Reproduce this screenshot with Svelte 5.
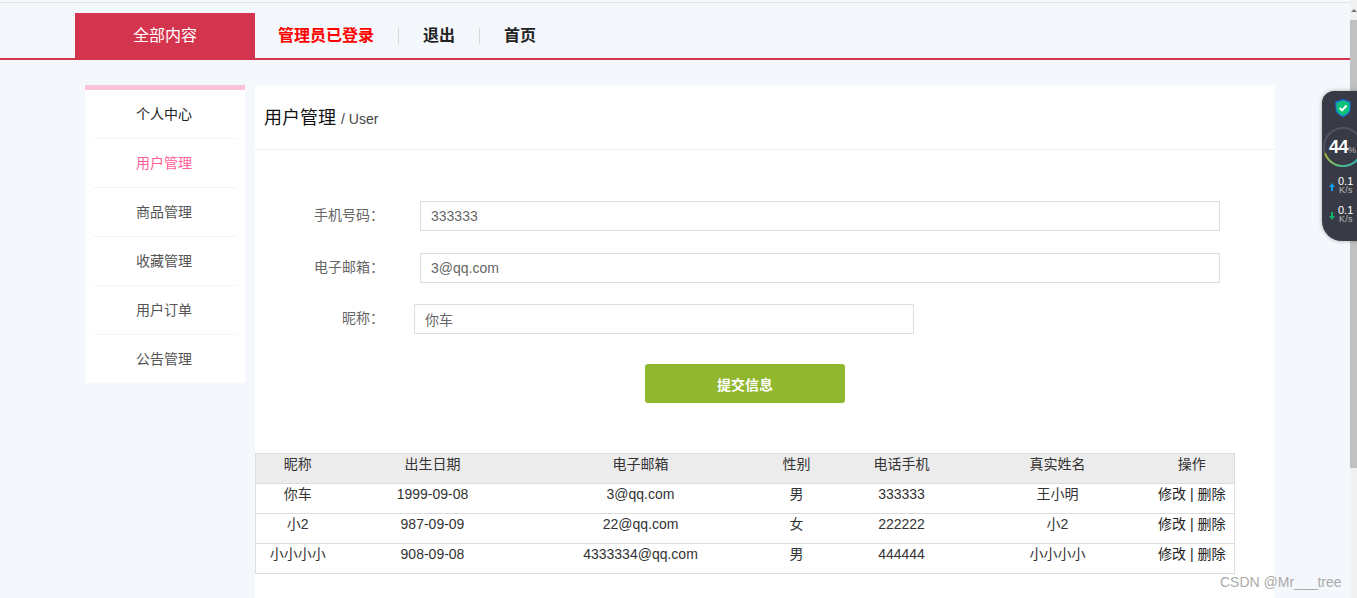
<script>
    const menu = [
        { name: '个人中心', cls: 'first' },
        { name: '用户管理', cls: 'active' },
        { name: '商品管理', cls: '' },
        { name: '收藏管理', cls: '' },
        { name: '用户订单', cls: '' },
        { name: '公告管理', cls: '' }
    ];

    const fields = [
        { label: '手机号码：', value: '333333', cls: 'first-row' },
        { label: '电子邮箱：', value: '3@qq.com', cls: '' },
        { label: '昵称：', value: '你车', cls: 'short' }
    ];

    const columns = [
        { title: '昵称', width: 84 },
        { title: '出生日期', width: 186 },
        { title: '电子邮箱', width: 230 },
        { title: '性别', width: 82 },
        { title: '电话手机', width: 128 },
        { title: '真实姓名', width: 184 },
        { title: '操作', width: 85 }
    ];

    const users = [
        ['你车', '1999-09-08', '3@qq.com', '男', '333333', '王小明'],
        ['小2', '987-09-09', '22@qq.com', '女', '222222', '小2'],
        ['小小小小', '908-09-08', '4333334@qq.com', '男', '444444', '小小小小']
    ];
</script>

<div class="page">
    <div class="strip"></div>
    <header class="topbar">
        <div class="all">全部内容</div>
        <nav class="links">
            <span class="admin">管理员已登录</span>
            <span class="link sep">退出</span>
            <span class="link">首页</span>
        </nav>
    </header>

    <div class="body">
        <aside class="side">
            {#each menu as item}
                <div class="side__item {item.cls}">{item.name}</div>
            {/each}
        </aside>

        <main class="main">
            <div class="title">用户管理 <small>/ User</small></div>

            <form class="form">
                {#each fields as f}
                    <div class="row {f.cls}">
                        <label class="row__label" for={f.label}>{f.label}</label>
                        <input id={f.label} value={f.value} />
                    </div>
                {/each}
                <div class="actions">
                    <button type="button" class="submit">提交信息</button>
                </div>
            </form>

            <table class="grid">
                <colgroup>
                    {#each columns as c}
                        <col style="width: {c.width}px" />
                    {/each}
                </colgroup>
                <thead>
                    <tr>
                        {#each columns as c}
                            <th>{c.title}</th>
                        {/each}
                    </tr>
                </thead>
                <tbody>
                    {#each users as u}
                        <tr>
                            {#each u as cell}
                                <td>{cell}</td>
                            {/each}
                            <td class="ops">修改 | 删除</td>
                        </tr>
                    {/each}
                </tbody>
            </table>
        </main>
    </div>

    <div class="scrollbar">
        <div class="scrollbar__arrow"></div>
        <div class="scrollbar__thumb"></div>
    </div>

    <div class="widget">
        <svg class="shield" width="16" height="18" viewBox="0 0 16 19">
            <path d="M8 0 L16 3 V10 C16 14.500 12 17.500 8 19 C4 17.500 0 14.500 0 10 V3 Z" fill="#1a6fe0" />
            <path d="M8 1.500 L14.800 4 V10 C14.800 13.800 11.500 16.300 8 17.600 C4.500 16.300 1.200 13.800 1.200 10 V4 Z" fill="#0dc27a" />
            <path d="M4.500 9.500 L7 12 L11.800 6.800" fill="none" stroke="#fff" stroke-width="2.200" />
        </svg>
        <div class="gauge">
            <svg width="44" height="40" viewBox="0 0 44 40">
                <defs>
                    <linearGradient id="arc" x1="0" y1="0" x2="1" y2="0">
                        <stop offset="0" stop-color="#a9b93a" />
                        <stop offset="0.4" stop-color="#4fb98a" />
                        <stop offset="1" stop-color="#2fb0b0" />
                    </linearGradient>
                </defs>
                <circle cx="21" cy="20" r="19" fill="none" stroke="#50535d" stroke-width="2" />
                <path d="M3.100 26.500 A19 19 0 0 0 38.900 26.500" fill="none" stroke="url(#arc)" stroke-width="2" />
            </svg>
            <span class="gauge__num">44<small>%</small></span>
        </div>
        <div class="speed">
            <svg width="6" height="8" viewBox="0 0 6 8"><path d="M3 0 L6 4 H4 V8 H2 V4 H0 Z" fill="#12a0f0" /></svg>
            <div class="speed__val">0.1<small>K/s</small></div>
        </div>
        <div class="speed">
            <svg width="6" height="8" viewBox="0 0 6 8"><path d="M3 8 L6 4 H4 V0 H2 V4 H0 Z" fill="#12b070" /></svg>
            <div class="speed__val">0.1<small>K/s</small></div>
        </div>
    </div>

    <div class="watermark">CSDN @Mr___tree</div>
</div>

<style>
    :global(body) {
        margin: 0;
    }
    .page {
        position: relative;
        height: 598px;
        overflow: hidden;
        background: #f4f7fb;
        font-family: "Liberation Sans", "Noto Sans CJK SC", sans-serif;
        color: #333;
        font-size: 14px;
    }
    .strip {
        height: 3px;
        box-sizing: border-box;
        border-bottom: 1px solid #e3e3e3;
    }
    .topbar {
        display: flex;
        height: 57px;
        padding: 10px 0 0 75px;
        box-sizing: border-box;
        border-bottom: 2px solid #d3354f;
    }
    .all {
        width: 180px;
        height: 45px;
        background: #d3354f;
        color: #fff;
        font-size: 16px;
        line-height: 45px;
        text-align: center;
    }
    .links {
        display: flex;
        align-items: center;
        height: 45px;
        font-size: 16px;
        font-weight: bold;
        color: #222;
    }
    .admin {
        margin-left: 23px;
        margin-right: 24px;
        color: #f00;
        line-height: 16px;
    }
    .link {
        padding: 0 24px;
        line-height: 16px;
    }
    .sep {
        border-left: 1px solid #d8d8d8;
        border-right: 1px solid #d8d8d8;
    }
    .body {
        display: flex;
        align-items: flex-start;
        padding: 25px 0 0 85px;
    }
    .side {
        width: 160px;
        padding: 0 8px;
        box-sizing: border-box;
        background: #fff;
        border-top: 5px solid #fdc3da;
    }
    .side__item {
        height: 49px;
        padding-right: 2px;
        line-height: 48px;
        text-align: center;
        color: #555;
        border-bottom: 1px solid #f4f4f4;
        box-sizing: border-box;
    }
    .side__item:last-child {
        height: 48px;
        border-bottom: 0;
    }
    .first {
        color: #222;
    }
    .active {
        color: #ff5f96;
    }
    .main {
        width: 1020px;
        margin-left: 10px;
        height: 520px;
        background: #fff;
    }
    .title {
        height: 65px;
        padding-left: 9px;
        box-sizing: border-box;
        line-height: 66px;
        font-size: 18px;
        color: #111;
        border-bottom: 1px solid #eee;
    }
    .title small {
        font-size: 14px;
        color: #444;
    }
    .form {
        padding-top: 51px;
    }
    .row {
        display: flex;
        height: 30px;
        margin-bottom: 21px;
    }
    .row.first-row {
        margin-bottom: 22px;
    }
    .row.short {
        margin-bottom: 30px;
    }
    .row__label {
        width: 129px;
        text-align: right;
        line-height: 28px;
        color: #666;
    }
    input {
        width: 800px;
        height: 30px;
        margin-left: 36px;
        padding: 0 10px;
        box-sizing: border-box;
        border: 1px solid #ddd;
        font: inherit;
        color: #666;
        outline: none;
    }
    .short input {
        width: 500px;
        margin-left: 30px;
    }
    .actions {
        padding-left: 390px;
    }
    .submit {
        display: block;
        width: 200px;
        height: 39px;
        border: 0;
        border-radius: 3px;
        background: #91b72f;
        color: #fff;
        font: inherit;
        font-weight: bold;
    }
    .grid {
        width: 979px;
        margin-top: 50px;
        border-collapse: collapse;
        table-layout: fixed;
        border: 1px solid #ddd;
        color: #333;
    }
    th, td {
        height: 30px;
        padding: 0;
        box-sizing: border-box;
        vertical-align: top;
        text-align: center;
        font-weight: normal;
        line-height: 20px;
        border-top: 1px solid #ddd;
    }
    th {
        background: #ececec;
    }
    .ops {
        color: #222;
    }
    .scrollbar {
        position: absolute;
        top: 0;
        right: 0;
        bottom: 0;
        width: 7px;
        background: #f1f1f1;
    }
    .scrollbar__arrow {
        margin: 9px auto 8px;
        width: 0;
        border-left: 3px solid transparent;
        border-right: 3px solid transparent;
        border-bottom: 3px solid #777;
    }
    .scrollbar__thumb {
        height: 448px;
        background: #c1c1c1;
    }
    .widget {
        position: absolute;
        top: 91px;
        left: 1322px;
        width: 50px;
        height: 150px;
        padding-top: 8px;
        box-sizing: border-box;
        background: #383b45;
        border-radius: 12px 0 0 20px;
        color: #fff;
        box-shadow: 0 0 4px rgba(0, 0, 0, 0.3);
    }
    .shield {
        display: block;
        margin-left: 13px;
    }
    .gauge {
        position: relative;
        height: 40px;
        margin: 10px 0 9px;
    }
    .gauge svg {
        display: block;
    }
    .gauge__num {
        position: absolute;
        left: 7px;
        top: 0;
        line-height: 40px;
        font-size: 18px;
        font-weight: bold;
        letter-spacing: -0.500px;
    }
    .gauge__num small {
        font-size: 9px;
        font-weight: normal;
        letter-spacing: 0;
        color: #bbb;
    }
    .speed {
        display: flex;
        align-items: center;
        height: 19px;
        margin-bottom: 10px;
        padding-left: 7px;
    }
    .speed svg {
        margin-top: 3px;
    }
    .speed__val {
        margin-left: 3px;
        font-size: 11px;
        line-height: 10px;
    }
    .speed__val small {
        display: block;
        font-size: 9px;
        line-height: 9px;
        letter-spacing: 0.300px;
        color: #bbb;
        margin-left: 1px;
    }
    .watermark {
        position: absolute;
        left: 1220px;
        top: 574px;
        font-size: 14px;
        color: #aaa;
    }
</style>
